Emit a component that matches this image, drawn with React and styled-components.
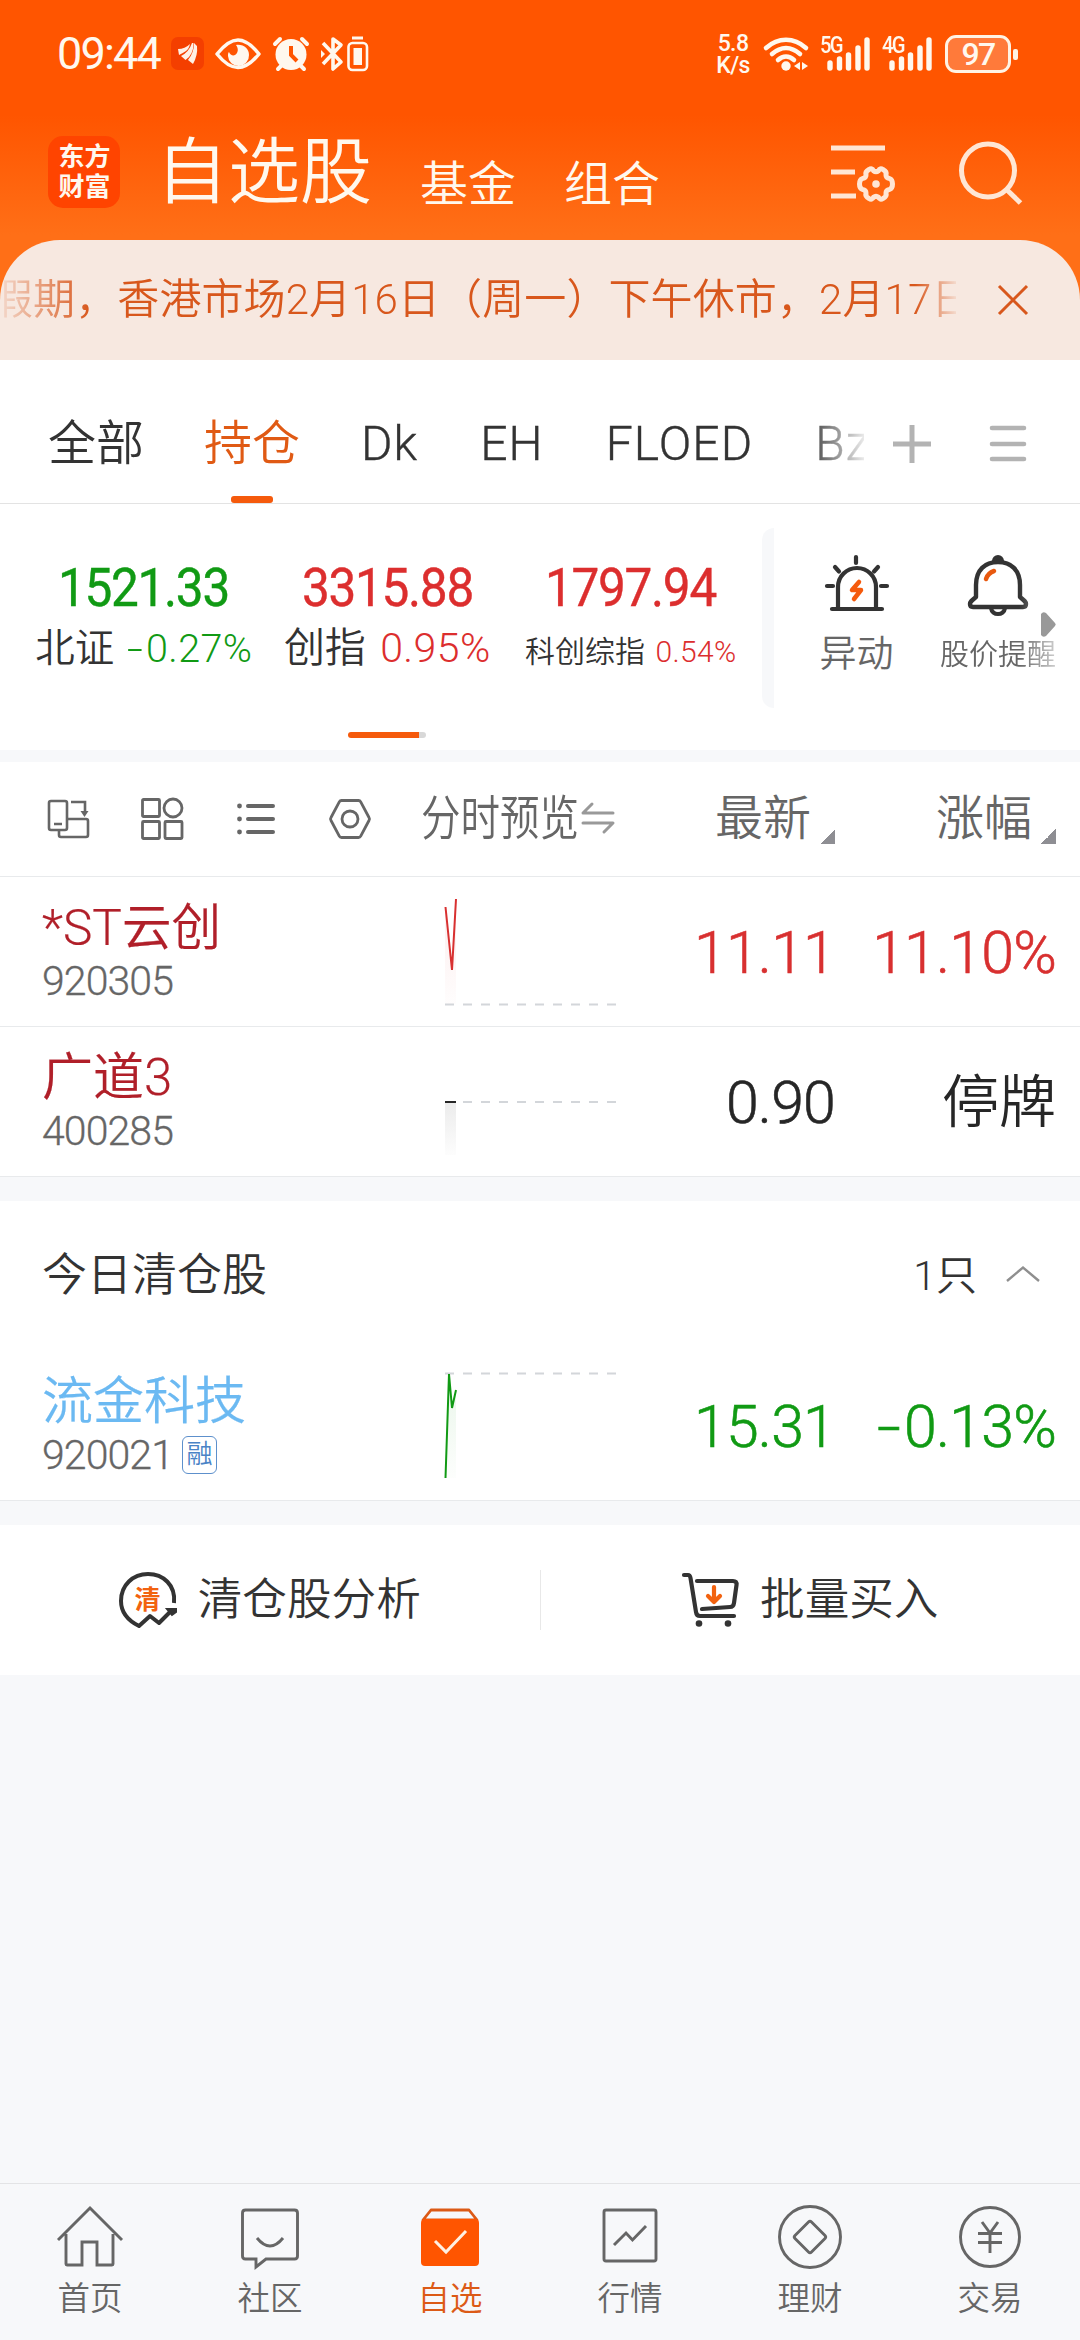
import styled, { createGlobalStyle } from "styled-components";

const GlobalStyle = createGlobalStyle`
  * {
    box-sizing: border-box;
  }
  body {
    margin: 0;
    background: #f7f8fa;
    font-family: Roboto, "Noto Sans CJK SC", sans-serif;
    font-weight: 350;
    color: #333;
  }
  svg {
    display: block;
    flex: none;
    overflow: visible;
  }
`;

const Page = styled.div`
  width: 1080px;
  height: 2340px;
  display: flex;
  flex-direction: column;
  overflow: hidden;
  background: #f7f8fa;
`;

/* ---------- top ---------- */

const Top = styled.header`
  height: 360px;
  flex: none;
  background: linear-gradient(#ff5500 0, #ff5500 115px, #ff6f17 235px);
  color: #fff8ee;
`;

const StatusBar = styled.div`
  height: 108px;
  padding: 0 62px 0 57px;
  display: flex;
  align-items: center;
  justify-content: space-between;
`;

const StatusGroup = styled.div`
  display: flex;
  align-items: center;
`;

const Clock = styled.span`
  width: 114px;
  font-size: 45px;
  line-height: 50px;
  font-weight: 400;
  letter-spacing: -1.8px;
`;

const NetSpeed = styled.div`
  width: 48px;
  padding-top: 1px;
  display: flex;
  flex-direction: column;
  align-items: center;
  font-size: 23px;
  line-height: 22px;
  font-weight: 500;
  letter-spacing: -0.6px;
  margin-right: 7px;
`;

const Signal = styled.div`
  position: relative;
  width: 50px;
  height: 36px;
  margin-right: ${(props) => props.$gap}px;
`;

const SignalLabel = styled.span`
  position: absolute;
  left: 0;
  top: 1px;
  font-size: 23px;
  line-height: 18px;
  font-weight: 500;
  letter-spacing: -2px;
  transform: scaleX(0.88);
  transform-origin: left;
`;

const Battery = styled.div`
  width: 66px;
  height: 38px;
  border: 3px solid #fff3e4;
  border-radius: 11px;
  background: #ff7a3a;
  font-size: 32px;
  line-height: 32px;
  font-weight: 500;
  letter-spacing: -1.8px;
  text-align: center;
`;

const BatteryCap = styled.div`
  width: 5px;
  height: 11px;
  margin-left: 2px;
  border-radius: 2px;
  background: #fff3e4;
`;

const TitleBar = styled.div`
  height: 132px;
  padding: 0 59px 0 48px;
  display: flex;
  align-items: flex-start;
`;

const Logo = styled.div`
  width: 72px;
  height: 72px;
  margin-top: 28px;
  padding: 6px 0 0 1px;
  border-radius: 15px;
  background: #ff4400;
  font-size: 26px;
  line-height: 30px;
  font-weight: 700;
  text-align: center;
`;

const Title = styled.h1`
  margin: 23px 48px 0 36px;
  font-size: 72px;
  line-height: 84px;
  font-weight: 350;
`;

const SubTitle = styled.span`
  margin: 47px 48px 0 0;
  font-size: 48px;
  line-height: 60px;
`;

const TitleActions = styled.div`
  display: flex;
  margin: 34px 0 0 auto;
  gap: 65px;
`;

const Notice = styled.div`
  height: 120px;
  display: flex;
  border-radius: 60px 60px 0 0;
  background: #f7e8e0;
  color: #d8571c;
  overflow: hidden;
`;

const NoticeText = styled.div`
  width: 956px;
  padding-top: 30px;
  overflow: hidden;
  white-space: nowrap;
  font-size: 42px;
  line-height: 60px;
  letter-spacing: 0.1px;
  text-indent: -9px;
  mask-image: linear-gradient(
    90deg,
    rgba(0, 0, 0, 0.1) 0,
    #000 90px,
    #000 915px,
    rgba(0, 0, 0, 0.1) 956px
  );
`;

const NoticeClose = styled.div`
  padding: 46px 0 0 42px;
`;

/* ---------- group tabs ---------- */

const Tabs = styled.nav`
  height: 144px;
  flex: none;
  display: flex;
  background: #fff;
  border-bottom: 1px solid #e3e3e3;
`;

const TabList = styled.div`
  width: 864px;
  padding-left: 48px;
  display: flex;
  gap: 60px;
  overflow: hidden;
  mask-image: linear-gradient(90deg, #000 805px, rgba(0, 0, 0, 0.1) 864px);
`;

const Tab = styled.div`
  display: flex;
  flex: none;
  flex-direction: column;
  align-items: center;
  justify-content: space-between;
  padding: 54px ${(props) => (props.$latin ? 1 : 0)}px 0;
  font-size: 48px;
  line-height: 60px;
  letter-spacing: ${(props) => (props.$latin ? 1.1 : 0)}px;
  -webkit-text-stroke: ${(props) => (props.$latin ? 0.4 : 0)}px;
  color: ${(props) => (props.$active ? "#e05a14" : "#333")};

  &::after {
    content: "";
    width: 42px;
    height: 7px;
    border-radius: 3px;
    background: ${(props) => (props.$active ? "#f55a0c" : "transparent")};
  }
`;

const TabTools = styled.div`
  display: flex;
  align-items: flex-start;
  padding: 64px 0 0 28px;
  gap: 58px;
`;

/* ---------- indexes ---------- */

const Market = styled.section`
  height: 246px;
  flex: none;
  display: flex;
  background: #fff;
`;

const IndexArea = styled.div`
  width: 762px;
  padding-left: 22px;
  display: flex;
  flex-direction: column;
`;

const IndexList = styled.div`
  height: 228px;
  display: flex;
`;

const IndexCard = styled.div`
  width: 243.5px;
  padding-top: 54px;
  display: flex;
  flex-direction: column;
  align-items: center;
  color: ${(props) => props.$color};
`;

const IndexValue = styled.div`
  font-size: 53px;
  line-height: 60px;
  font-weight: 450;
  letter-spacing: -1.4px;
  -webkit-text-stroke: 0.4px;
  transform: scaleX(0.935);
`;

const IndexLine = styled.div`
  display: flex;
  align-items: baseline;
  height: 60px;
  padding-top: ${(props) => (41 - props.$size) * 0.34}px;
  line-height: 60px;
  white-space: nowrap;
  font-size: ${(props) => props.$size}px;
  gap: ${(props) => props.$size * 0.35}px;
`;

const IndexName = styled.span`
  color: #333;
`;

const RateText = styled.span`
  letter-spacing: 0.01em;
`;

// wide minus in front of falling rates
const Sign = styled.span`
  display: inline-block;
  margin: 0 0.06em 0 0.1em;
  transform: scaleX(1.45);
  transform-origin: right;
`;

const Pager = styled.div`
  width: 78px;
  height: 6px;
  margin-left: 326px;
  border-radius: 3px;
  background: linear-gradient(90deg, #f55a0c 71px, #d8d8d8 71px);
`;

const Strip = styled.div`
  width: 12px;
  height: 180px;
  margin-top: 24px;
  border-radius: 12px 0 0 12px;
  background: #f7f8fa;
`;

const Shortcuts = styled.div`
  position: relative;
  flex: 1;
  display: flex;
  color: #666;
`;

const Shortcut = styled.div`
  display: flex;
  flex-direction: column;
  align-items: center;
  width: ${(props) => props.$width}px;
  padding-top: 51px;
  font-size: ${(props) => props.$size}px;
  line-height: 60px;
  white-space: nowrap;
  ${(props) =>
    props.$fade &&
    "mask-image: linear-gradient(90deg, #000 68%, rgba(0, 0, 0, 0.3) 100%);"}

  svg {
    margin-bottom: 14px;
  }
`;

const MoreArrow = styled.div`
  position: absolute;
  right: 24px;
  top: 108px;
`;

/* ---------- stock list ---------- */

const Panel = styled.section`
  flex: none;
  margin-top: ${(props) => props.$gap}px;
  background: #fff;
`;

const HeadRow = styled.div`
  display: grid;
  grid-template-columns: 421px 195px 219px 221px;
  height: 115px;
  border-bottom: 1px solid #e8eaec;
  font-size: 48px;
  line-height: 60px;
  color: #666;
`;

const ViewIcons = styled.div`
  display: flex;
  gap: 52px;
  padding: 36px 0 0 47px;
`;

const Preview = styled.div`
  display: flex;
  align-items: flex-start;
  padding-top: 27px;

  svg {
    margin: 13px 0 0 -32px;
  }
`;

const Squeezed = styled.span`
  width: 192px;
  white-space: nowrap;
  transform: scaleX(0.823);
  transform-origin: left;
`;

const SortHead = styled.div`
  display: flex;
  justify-content: flex-end;
  gap: 9px;
  padding-top: 27px;

  &::after {
    content: "";
    width: 15px;
    height: 15px;
    margin-top: 40px;
    background: linear-gradient(135deg, transparent 50%, #8e8e93 50%);
  }
`;

const Row = styled.div`
  display: grid;
  grid-template-columns: 445px 171px 219px 221px;
  height: 150px;
  border-bottom: 1px solid #e8eaec;
`;

const NameCell = styled.div`
  padding: 21px 0 0 42px;
`;

const StockName = styled.div`
  font-size: ${(props) => props.$size || 51}px;
  line-height: 60px;
  -webkit-text-stroke: 0.2px;
  color: ${(props) => props.$color};
`;

const CodeLine = styled.div`
  display: flex;
  align-items: center;
  height: 46px;
  gap: 9px;
  font-size: 41px;
  line-height: 46px;
  letter-spacing: -0.9px;
  -webkit-text-stroke: 0.3px;
  color: #666;
`;

const Badge = styled.span`
  width: 35px;
  height: 38px;
  border: 1.5px solid #5d90cc;
  border-radius: 6px;
  font-size: 26px;
  line-height: 34px;
  letter-spacing: 0;
  -webkit-text-stroke: 0;
  text-align: center;
  color: #4a83c6;
`;

const Value = styled.div`
  padding-top: 46px;
  font-size: ${(props) => (props.$halted ? 57 : 59)}px;
  line-height: 60px;
  letter-spacing: ${(props) => (props.$halted ? 0 : -0.8)}px;
  -webkit-text-stroke: ${(props) => (props.$halted ? 0 : 0.6)}px;
  text-align: right;
  white-space: nowrap;
  color: ${(props) => props.$color};
`;

const SectionHead = styled.div`
  height: 150px;
  padding: 0 40px 0 42px;
  display: flex;
  align-items: center;
  font-size: 45px;
  line-height: 60px;

  svg {
    margin-bottom: 4px;
  }
`;

const Count = styled.span`
  margin: 0 29px 0 auto;
  font-size: 41px;
`;

const ActionRow = styled.div`
  display: flex;
  height: 150px;
`;

const Action = styled.div`
  flex: 1;
  display: flex;
  align-items: center;
  justify-content: center;
  gap: 21px;
  padding-bottom: 1px;
  font-size: 44.6px;
  line-height: 60px;
`;

const Divider = styled.div`
  width: 1px;
  height: 60px;
  margin-top: 45px;
  background: #e8e8e8;
`;

/* ---------- bottom nav ---------- */

const BottomNav = styled.nav`
  display: flex;
  height: 157px;
  margin-top: auto;
  flex: none;
  border-top: 1px solid #e3e4e6;
`;

const NavItem = styled.div`
  flex: 1;
  display: flex;
  flex-direction: column;
  align-items: center;
  padding-top: 20px;
  font-size: 32.5px;
  line-height: 40px;
  color: ${(props) => (props.$active ? "#dc5a16" : "#666")};

  svg {
    margin-bottom: 9px;
  }
`;

/* ---------- icons ---------- */

const StatusIcons = () => (
  <svg width="198" height="36" viewBox="171 36 198 36" fill="none">
    <rect x="171" y="37" width="33" height="33" rx="7" fill="#f43f00" />
    <path
      d="M178 49q7 0 12-5-1 5-4 7t-7 4zM181 56q8-4 11-13l1.500 0q0 12-8 17zM188 60q6-7 6-17l3 3q1 9-4 18z"
      fill="#fff0e6"
    />
    <path
      d="M217 54c8-10 15-14 21-14s13 4 21 14c-8 10-15 13.500-21 13.500S225 64 217 54z"
      stroke="currentColor"
      strokeWidth="3.500"
      strokeLinejoin="round"
    />
    <path
      d="M236 45c8-1 13 4 13 10a10.500 10.500 0 0 1-21 1c0-2 0-3 1-4 1 3 4 4 6 3 3-2 4-6 1-10z"
      fill="currentColor"
    />
    <circle cx="291" cy="54.500" r="15.500" fill="currentColor" />
    <path
      d="M275 44l5-5M307 44l-5-5M281 66l-3 3M301 66l3 3"
      stroke="currentColor"
      strokeWidth="4"
      strokeLinecap="round"
    />
    <path d="M291 46v9l6 6" stroke="#ff5500" strokeWidth="4" />
    <path
      d="M323 43l18 19-8 7V39l8 6-18 19"
      stroke="currentColor"
      strokeWidth="3.600"
      strokeLinejoin="round"
    />
    <path d="M321 50l4 4-4 4z" fill="currentColor" />
    <rect
      x="348.500"
      y="43"
      width="18.500"
      height="27"
      rx="4"
      stroke="currentColor"
      strokeWidth="2.600"
    />
    <rect x="353.500" y="48" width="8.500" height="17" fill="currentColor" />
    <path d="M352 38h11" stroke="currentColor" strokeWidth="3" />
  </svg>
);

const Wifi = () => (
  <svg width="56" height="36" viewBox="765 36 56 36" fill="none">
    <g stroke="currentColor" strokeWidth="4.600" strokeLinecap="round">
      <path d="M767 48c12-11 28-11 40 0" />
      <path d="M773 54c9-8 19-8 28 0" />
      <path d="M779 60c5-4.500 11-4.500 16 0" />
    </g>
    <circle cx="787" cy="66" r="4.700" fill="currentColor" />
    <path d="M795 66l6-4v8zM803 62l6 4-6 4z" fill="currentColor" />
  </svg>
);

const Bars = () => (
  <svg width="50" height="36" viewBox="0 0 50 36">
    <path
      d="M10 27v5M19.500 23v9M28.500 19v13M38 12v20M47 4v28"
      stroke="currentColor"
      strokeWidth="5.400"
      strokeLinecap="round"
    />
  </svg>
);

const ListGear = () => (
  <svg width="63" height="64" viewBox="831 142 63 64" fill="none">
    <g stroke="#ffe6d4" strokeWidth="5">
      <path d="M831 148h54M831 172h24M831 196h25" />
      <path
        strokeLinejoin="round"
        d="M869 169.500q3-2 4.500 1.200q2.500 2 5 0q1.500-3.200 4.500-1.200q4 2 3 5.500q0 3 3.500 3.500q3 1 3 5.500q0 4.500-3 5.500q-3.500.500-3.500 3.500q1 3.500-3 5.500q-3 2-4.500-1.200q-2.500-2-5 0q-1.500 3.200-4.500 1.200q-4-2-3-5.500q0-3-3.500-3.500q-3-1-3-5.500q0-4.500 3-5.500q3.500-.500 3.500-3.500q-1-3.500 3-5.500z"
      />
    </g>
    <circle cx="876" cy="184" r="3.800" fill="#ffe6d4" />
  </svg>
);

const Search = () => (
  <svg width="62" height="64" viewBox="958 141 62 64" fill="none">
    <g stroke="#ffe6d4" strokeWidth="5">
      <circle cx="987" cy="169.500" r="26.500" />
      <path d="M1005 188l14.500 14" />
    </g>
  </svg>
);

const Siren = () => (
  <svg width="64" height="56" viewBox="0 0 64 56" fill="none">
    <g stroke="#333" strokeWidth="4.200" strokeLinecap="round">
      <path d="M7 54h50M31 2v6M2 31h6M56 31h6M10 12l4 4.500M53 12l-4 4.500" />
      <path d="M13 53V32a19 19 0 0 1 38 0v21" />
    </g>
    <path
      d="M34 27l-7 8h9l-7 9"
      stroke="#f55a0c"
      strokeWidth="4.500"
      strokeLinecap="round"
      strokeLinejoin="round"
    />
  </svg>
);

const Bell = () => (
  <svg width="60" height="56" viewBox="0 0 60 56" fill="none">
    <path d="M24 6a6 6 0 0 1 12 0l2 2H22z" fill="#333" />
    <path
      d="M8 42c-5 4-6 5-6 7s1 3 3 3h50c2 0 3-1 3-3s-1-3-6-7V30C52 15 43 7 30 7S8 15 8 30z"
      stroke="#333"
      strokeWidth="4.400"
      strokeLinejoin="round"
    />
    <path d="M23 53c1 8 13 8 14 0" stroke="#333" strokeWidth="4.200" />
    <path
      d="M18 24q2-6 8-8"
      stroke="#e8590f"
      strokeWidth="4.500"
      strokeLinecap="round"
    />
  </svg>
);

const Rotate = () => (
  <svg width="42" height="42" viewBox="0 0 42 42" fill="none">
    <g stroke="#666" strokeWidth="2.600">
      <rect x="2" y="3" width="18" height="29" rx="2" />
      <path d="M12 32v5a2 2 0 0 0 2 2h25a2 2 0 0 0 2-2V23a2 2 0 0 0-2-2H20" />
      <path d="M7 26h8M24 4h14v10" />
    </g>
    <path d="M33.500 13h8L37.500 19z" fill="#666" />
  </svg>
);

const Grid = () => (
  <svg width="42" height="42" viewBox="0 0 42 42" fill="none">
    <g stroke="#666" strokeWidth="2.800">
      <rect x="1.500" y="1.500" width="17" height="17" rx="1" />
      <circle cx="32" cy="10" r="9" />
      <rect x="1.500" y="23.500" width="17" height="17" rx="1" />
      <rect x="24" y="23.500" width="17" height="17" rx="1" />
    </g>
  </svg>
);

const List = () => (
  <svg width="42" height="42" viewBox="0 0 42 42">
    <path
      d="M13 8h25M13 21h25M13 34h25"
      stroke="#666"
      strokeWidth="4"
      strokeLinecap="round"
    />
    <g fill="#666">
      <circle cx="4.500" cy="8" r="2.400" />
      <circle cx="4.500" cy="21" r="2.400" />
      <circle cx="4.500" cy="34" r="2.400" />
    </g>
  </svg>
);

const Hexagon = () => (
  <svg width="42" height="42" viewBox="0 0 42 42" fill="none">
    <g stroke="#666" strokeWidth="2.800" strokeLinejoin="round">
      <path d="M12.500 2.500h17q1.500 0 2.200 1.300L40 19.500q1 1.500 0 3L31.700 38.200q-.700 1.300-2.200 1.300h-17q-1.500 0-2.200-1.300L2 22.500q-1-1.500 0-3L10.300 3.800q.700-1.300 2.200-1.300z" />
      <circle cx="21" cy="21" r="8" />
    </g>
  </svg>
);

const Swap = () => (
  <svg width="34" height="32" viewBox="0 0 34 32" fill="none">
    <path
      d="M32 11H2L11 2M2 21h30L23 30"
      stroke="#999"
      strokeWidth="3"
      strokeLinecap="round"
      strokeLinejoin="round"
    />
  </svg>
);

const Clear = () => (
  <svg width="58" height="56" viewBox="0 0 58 56" fill="none">
    <path
      d="M55 31C57 13 44 2 29 2S2 13 2 29c0 12 8 20 18 25l11-10 9 7 13-13"
      stroke="#333"
      strokeWidth="4"
      strokeLinejoin="round"
    />
    <path d="M48 37h9v3l-4 3z" fill="#333" stroke="#333" strokeWidth="2" />
    <text
      x="28.500"
      y="37"
      fontSize="26"
      fontWeight="700"
      textAnchor="middle"
      fill="#f2620f"
    >
      清
    </text>
  </svg>
);

const Cart = () => (
  <svg width="57" height="56" viewBox="0 0 57 56" fill="none">
    <g
      stroke="#333"
      strokeWidth="4.200"
      strokeLinecap="round"
      strokeLinejoin="round"
    >
      <path d="M2 3h4q2 0 2.500 3L14 40q.500 4 4 4h34" />
      <path d="M15 9h36q4 0 3.500 4L52 31q-.500 4-4 4L20 37" />
    </g>
    <circle cx="17" cy="51.500" r="3.300" fill="#333" />
    <circle cx="46" cy="51.500" r="3.300" fill="#333" />
    <path
      d="M32 15v13M26 24l6 6 6-6"
      stroke="#f2620f"
      strokeWidth="4.200"
      strokeLinecap="round"
      strokeLinejoin="round"
    />
  </svg>
);

const navIcon = {
  home: <path d="M1 36L33 4l32 32M9 30v30q0 1 1 1h15V38h15v23h15q1 0 1-1V30" />,
  chat: (
    <>
      <path d="M8.500 6h49q3 0 3 3v43q0 3-3 3H29l-10 8v-8H8.500q-3 0-3-3V9q0-3 3-3z" />
      <path d="M20 34q13 16 26 0" />
    </>
  ),
  market: (
    <>
      <rect x="7" y="6" width="52" height="51" rx="2" />
      <path d="M17 41l12-12 6.500 7L49 22" />
    </>
  ),
  wealth: (
    <>
      <circle cx="33" cy="33" r="30.500" />
      <path d="M31.500 18q1.500-1.500 3 0L48 31.500q1.500 1.500 0 3L34.500 48q-1.500 1.500-3 0L18 34.500q-1.500-1.500 0-3z" />
    </>
  ),
  trade: (
    <>
      <circle cx="33" cy="33" r="29.500" />
      <path d="M25 18l8 11 8-11M21 29.500h24M21 38.500h24M33 29v20" />
    </>
  ),
};

const NavIcon = ({ name }) =>
  name === "pick" ? (
    <svg width="66" height="66" viewBox="0 0 66 66" fill="none">
      <path
        d="M14 6h38l8 10H6z"
        stroke="#dc5a16"
        strokeWidth="2.800"
        strokeLinejoin="round"
      />
      <rect x="4" y="15" width="58" height="47" rx="4" fill="#ff5500" />
      <path d="M18 37l11 11 20-21" stroke="#fff0e2" strokeWidth="3" />
    </svg>
  ) : (
    <svg
      width="66"
      height="66"
      viewBox="0 0 66 66"
      fill="none"
      stroke="#666"
      strokeWidth="2.900"
    >
      {navIcon[name]}
    </svg>
  );

const Trend = ({ id, base, line, area, color }) => (
  <svg width="171" height="149" viewBox="0 0 171 149" fill="none">
    <defs>
      <linearGradient id={id} x1="0" y1="0" x2="0" y2="1">
        <stop offset="0" stopColor={color} stopOpacity="0.090" />
        <stop offset="1" stopColor={color} stopOpacity="0.010" />
      </linearGradient>
    </defs>
    <path d={area} fill={`url(#${id})`} />
    <path
      d={`M0 ${base}h171`}
      stroke="#d3d6da"
      strokeWidth="2"
      strokeDasharray="9 9"
    />
    <path d={line} stroke={color} strokeWidth="2" />
  </svg>
);

/* ---------- data ---------- */

const tabs = ["全部", "持仓", "Dk", "EH", "FLOED", "Bz"];

const indexes = [
  { name: "北证", value: "1521.33", rate: "-0.27%", size: 39.5, color: "#119a14" },
  { name: "创指", value: "3315.88", rate: "0.95%", size: 41, color: "#dc2e2e" },
  { name: "科创综指", value: "1797.94", rate: "0.54%", size: 30, color: "#dc2e2e" },
];

const holdings = [
  {
    name: "*ST云创",
    nameSize: 49.5,
    code: "920305",
    price: "11.11",
    rate: "11.10%",
    nameColor: "#b01f29",
    color: "#d83030",
    base: 127.5,
    line: "M.500 30L7 93L11 22",
    area: "M0 30L7 93L11 22V127H0z",
  },
  {
    name: "广道3",
    code: "400285",
    price: "0.90",
    rate: "停牌",
    halted: true,
    nameColor: "#b01f29",
    color: "#262626",
    base: 75,
    line: "M0 75h11",
    area: "M0 75h11v53H0z",
  },
];

const cleared = [
  {
    name: "流金科技",
    code: "920021",
    badge: "融",
    price: "15.31",
    rate: "-0.13%",
    nameColor: "#6bb9f2",
    color: "#119a14",
    base: 22.5,
    line: "M.500 127L4 23L7 57L11 39",
    area: "M0 127L4 23L7 57L11 39V127z",
  },
];

const navs = [
  { label: "首页", icon: "home" },
  { label: "社区", icon: "chat" },
  { label: "自选", icon: "pick" },
  { label: "行情", icon: "market" },
  { label: "理财", icon: "wealth" },
  { label: "交易", icon: "trade" },
];

function Rate({ children }) {
  if (!children.startsWith("-")) return children;
  return (
    <>
      <Sign>-</Sign>
      {children.slice(1)}
    </>
  );
}

function StockRow({ stock }) {
  return (
    <Row>
      <NameCell>
        <StockName $color={stock.nameColor} $size={stock.nameSize}>
          {stock.name}
        </StockName>
        <CodeLine>
          {stock.code}
          {stock.badge && <Badge>{stock.badge}</Badge>}
        </CodeLine>
      </NameCell>
      <Trend
        id={`trend-${stock.code}`}
        base={stock.base}
        line={stock.line}
        area={stock.area}
        color={stock.color}
      />
      <Value $color={stock.color}>{stock.price}</Value>
      <Value $color={stock.color} $halted={stock.halted}>
        <Rate>{stock.rate}</Rate>
      </Value>
    </Row>
  );
}

function App() {
  return (
    <Page>
      <GlobalStyle />
      <Top>
        <StatusBar>
          <StatusGroup>
            <Clock>09:44</Clock>
            <StatusIcons />
          </StatusGroup>
          <StatusGroup>
            <NetSpeed>
              <span>5.8</span>
              <span>K/s</span>
            </NetSpeed>
            <Wifi />
            <Signal $gap={12}>
              <SignalLabel>5G</SignalLabel>
              <Bars />
            </Signal>
            <Signal $gap={13}>
              <SignalLabel>4G</SignalLabel>
              <Bars />
            </Signal>
            <Battery>97</Battery>
            <BatteryCap />
          </StatusGroup>
        </StatusBar>
        <TitleBar>
          <Logo>
            东方
            <br />
            财富
          </Logo>
          <Title>自选股</Title>
          <SubTitle>基金</SubTitle>
          <SubTitle>组合</SubTitle>
          <TitleActions>
            <ListGear />
            <Search />
          </TitleActions>
        </TitleBar>
        <Notice>
          <NoticeText>
            假期，香港市场2月16日（周一）下午休市，2月17日
          </NoticeText>
          <NoticeClose>
            <svg width="30" height="28" viewBox="0 0 30 28">
              <path d="M1 0l28 28M29 0L1 28" stroke="#d8571c" strokeWidth="3" />
            </svg>
          </NoticeClose>
        </Notice>
      </Top>

      <Tabs>
        <TabList>
          {tabs.map((tab) => (
            <Tab
              key={tab}
              $active={tab === "持仓"}
              $latin={/^[A-Za-z]+$/.test(tab)}
            >
              {tab}
            </Tab>
          ))}
        </TabList>
        <TabTools>
          <svg width="40" height="40" viewBox="0 0 40 40">
            <path d="M1 20h38M20 1v38" stroke="#b3b3b3" strokeWidth="5" />
          </svg>
          <svg width="36" height="40" viewBox="0 0 36 40">
            <path
              d="M2 4h32M2 20h32M2 35h32"
              stroke="#b3b3b3"
              strokeWidth="4.600"
              strokeLinecap="round"
            />
          </svg>
        </TabTools>
      </Tabs>

      <Market>
        <IndexArea>
          <IndexList>
            {indexes.map((item) => (
              <IndexCard key={item.name} $color={item.color}>
                <IndexValue>{item.value}</IndexValue>
                <IndexLine $size={item.size}>
                  <IndexName>{item.name}</IndexName>
                  <RateText>
                    <Rate>{item.rate}</Rate>
                  </RateText>
                </IndexLine>
              </IndexCard>
            ))}
          </IndexList>
          <Pager />
        </IndexArea>
        <Strip />
        <Shortcuts>
          <Shortcut $width={165} $size={37}>
            <Siren />
            异动
          </Shortcut>
          <Shortcut $width={118} $size={29} $fade>
            <Bell />
            股价提醒
          </Shortcut>
          <MoreArrow>
            <svg width="15" height="25" viewBox="0 0 15 25">
              <path
                d="M0 2q2-3 5-1l9 10q1.500 1.500 0 3L5 24q-3 2-5-1z"
                fill="#999"
              />
            </svg>
          </MoreArrow>
        </Shortcuts>
      </Market>

      <Panel $gap={12}>
        <HeadRow>
          <ViewIcons>
            <Rotate />
            <Grid />
            <List />
            <Hexagon />
          </ViewIcons>
          <Preview>
            <Squeezed>分时预览</Squeezed>
            <Swap />
          </Preview>
          <SortHead>最新</SortHead>
          <SortHead>涨幅</SortHead>
        </HeadRow>
        {holdings.map((stock) => (
          <StockRow key={stock.code} stock={stock} />
        ))}
      </Panel>

      <Panel $gap={24}>
        <SectionHead>
          今日清仓股
          <Count>1只</Count>
          <svg width="34" height="16" viewBox="0 0 34 16" fill="none">
            <path d="M1 15L17 1.500L33 15" stroke="#8f8f8f" strokeWidth="2.400" />
          </svg>
        </SectionHead>
        {cleared.map((stock) => (
          <StockRow key={stock.code} stock={stock} />
        ))}
      </Panel>

      <Panel $gap={24}>
        <ActionRow>
          <Action>
            <Clear />
            清仓股分析
          </Action>
          <Divider />
          <Action>
            <Cart />
            批量买入
          </Action>
        </ActionRow>
      </Panel>

      <BottomNav>
        {navs.map((nav) => (
          <NavItem key={nav.label} $active={nav.icon === "pick"}>
            <NavIcon name={nav.icon} />
            {nav.label}
          </NavItem>
        ))}
      </BottomNav>
    </Page>
  );
}

export default App;
